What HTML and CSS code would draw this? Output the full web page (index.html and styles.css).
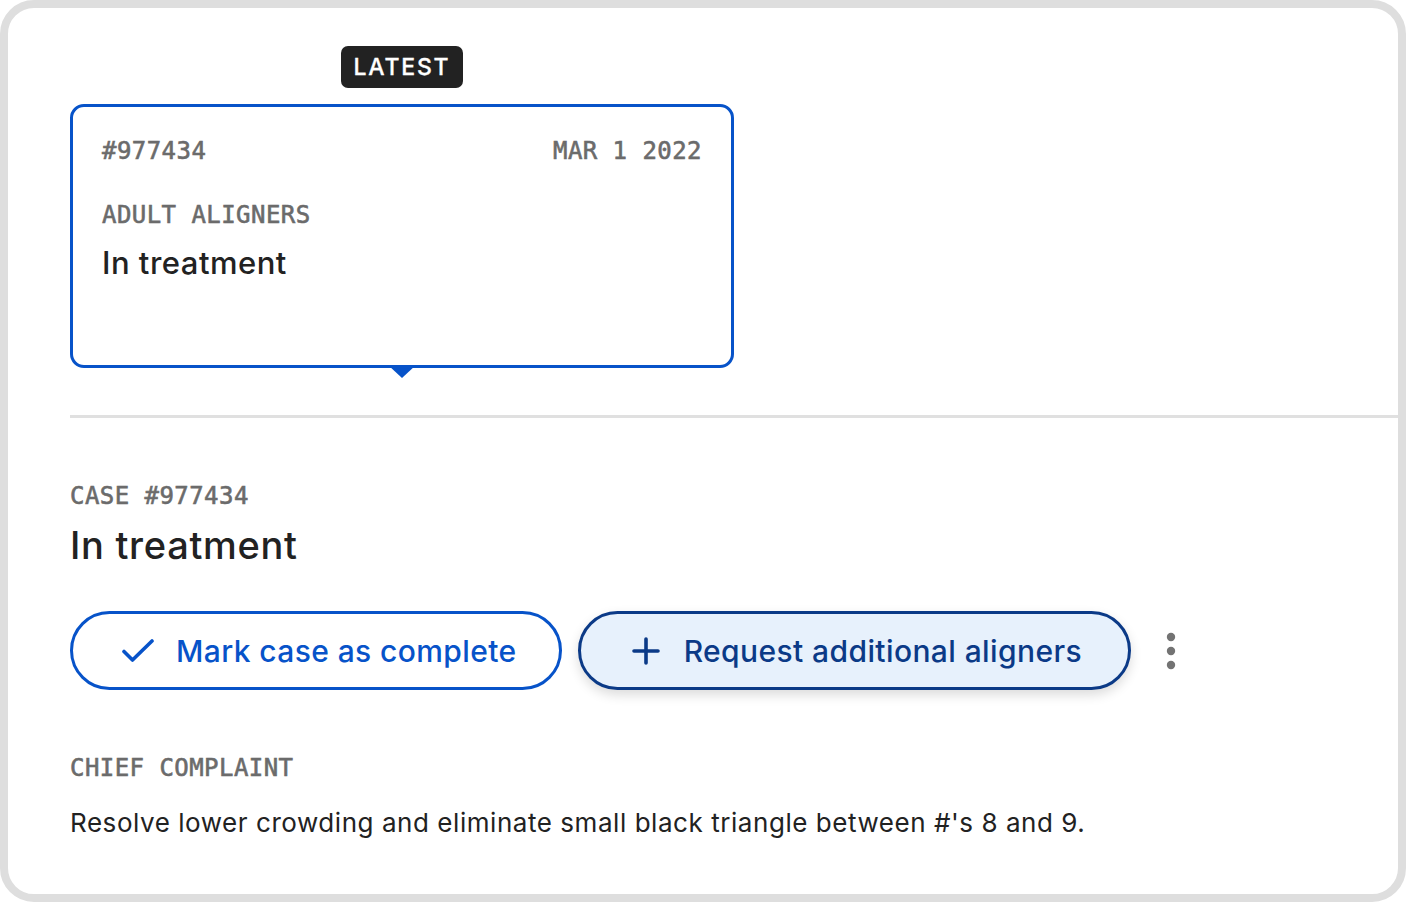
FILE: index.html
```html
<!DOCTYPE html>
<html lang="en">
<head>
<meta charset="utf-8">
<title>Case</title>
<link rel="stylesheet" href="styles.css">
</head>
<body>
<div class="frame">
  <section class="history">
    <div class="case-wrap">
      <span class="badge">LATEST</span>
      <div class="case-card">
        <div class="card-top">
          <span class="mono">#977434</span>
          <span class="mono">MAR 1 2022</span>
        </div>
        <div class="mono card-type">ADULT ALIGNERS</div>
        <div class="card-status">In treatment</div>
      </div>
    </div>
  </section>
  <div class="divider"></div>
  <section class="details">
    <div class="mono">CASE #977434</div>
    <h1 class="title">In treatment</h1>
    <div class="actions">
      <button class="btn btn-outline" type="button">
        <svg class="icon-check" width="32" height="24" viewBox="0 0 32 24"><path d="M2 12.5 L10.5 21 L30 2" fill="none" stroke="currentColor" stroke-width="3.6" stroke-linecap="round" stroke-linejoin="round"/></svg>
        <span>Mark case as complete</span>
      </button>
      <button class="btn btn-filled" type="button">
        <svg class="icon-plus" width="28" height="28" viewBox="0 0 28 28"><path d="M14 2 V26 M2 14 H26" fill="none" stroke="currentColor" stroke-width="3.6" stroke-linecap="round"/></svg>
        <span>Request additional aligners</span>
      </button>
      <button class="kebab" type="button" aria-label="More">
        <svg width="10" height="38" viewBox="0 0 10 38"><circle cx="5" cy="5" r="4.2" fill="currentColor"/><circle cx="5" cy="19" r="4.2" fill="currentColor"/><circle cx="5" cy="33" r="4.2" fill="currentColor"/></svg>
      </button>
    </div>
    <div class="mono label">CHIEF COMPLAINT</div>
    <p class="complaint">Resolve lower crowding and eliminate small black triangle between #'s 8 and 9.</p>
  </section>
</div>
</body>
</html>
```
FILE: styles.css
```css
* { box-sizing: border-box; }
html, body { margin: 0; padding: 0; background: #ffffff; }
body { font-family: Inter, "Noto Sans", sans-serif; color: #222222; }

.frame {
  width: 1406px;
  height: 902px;
  border: 8px solid #dedede;
  border-radius: 34px;
  padding: 38px 0 0 62px;
  overflow: hidden;
  background: #ffffff;
}

.mono {
  font-family: "DejaVu Sans Mono", "Liberation Mono", monospace;
  font-size: 24px;
  line-height: 28px;
  letter-spacing: 0.45px;
  color: #6b6b6b;
  -webkit-text-stroke: 0.6px #6b6b6b;
}

.case-wrap {
  width: 664px;
  display: flex;
  flex-direction: column;
  align-items: center;
}

.badge {
  display: inline-flex;
  align-items: center;
  justify-content: center;
  height: 42px;
  width: 122px;
  border-radius: 7px;
  background: #222222;
  color: #ffffff;
  font-size: 23px;
  font-weight: 500;
  letter-spacing: 1.8px;
  -webkit-text-stroke: 0.3px #ffffff;
  margin-bottom: 16px;
}

.case-card {
  position: relative;
  width: 100%;
  height: 264px;
  border: 3px solid #0753c9;
  border-radius: 14px;
  padding: 30px 29px 0 29px;
}
.case-card::after {
  content: "";
  position: absolute;
  left: 50%;
  top: 258px;
  width: 28px;
  height: 13px;
  transform: translateX(-50%);
  background: #0753c9;
  clip-path: polygon(0 0, 100% 0, 50% 100%);
}

.card-top {
  display: flex;
  justify-content: space-between;
}
.card-type { margin-top: 36px; }
.card-status {
  margin-top: 14px;
  font-size: 31px;
  line-height: 40px;
  font-weight: 500;
  letter-spacing: 0.5px;
  color: #222222;
}

.divider {
  height: 3px;
  margin-top: 47px;
  background: #e0e0e0;
}

.details { padding-top: 64px; }

.title {
  margin: 12px 0 0 0;
  font-size: 38px;
  line-height: 46px;
  font-weight: 500;
  letter-spacing: 0.7px;
  color: #222222;
}

.actions {
  display: flex;
  align-items: center;
  margin-top: 43px;
}

.btn {
  display: inline-flex;
  align-items: center;
  height: 79px;
  border-radius: 40px;
  border: 3px solid;
  font-family: Inter, "Noto Sans", sans-serif;
  font-size: 30px;
  font-weight: 500;
  letter-spacing: 0.4px;
  cursor: pointer;
}
.btn-outline {
  background: #ffffff;
  border-color: #0753c9;
  color: #0753c9;
  padding: 0 42px 0 49px;
  gap: 22px;
}
.btn-filled {
  margin-left: 16px;
  background: #e7f1fc;
  border-color: #0b3a87;
  color: #0b3a87;
  padding: 0 46px 0 51px;
  gap: 24px;
  box-shadow: 0 5px 12px rgba(0, 0, 0, 0.14);
}
.icon-check { flex: none; }
.icon-plus { flex: none; }

.kebab {
  margin-left: 20px;
  width: 40px;
  height: 50px;
  border: 0;
  padding: 0;
  background: transparent;
  color: #737373;
  display: inline-flex;
  align-items: center;
  justify-content: center;
}

.label { margin-top: 64px; }

.complaint {
  margin: 24px 0 0 0;
  font-size: 26px;
  line-height: 34px;
  font-weight: 400;
  letter-spacing: 0.55px;
  color: #222222;
}
```
